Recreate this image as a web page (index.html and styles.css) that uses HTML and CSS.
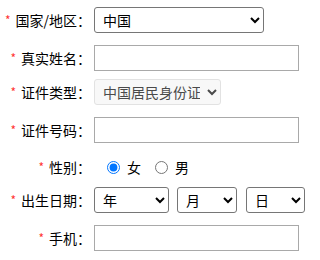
FILE: index.html
```html
<!DOCTYPE html>
<html lang="zh-CN">
<head>
<meta charset="utf-8">
<title>注册</title>
<link rel="stylesheet" href="styles.css">
</head>
<body>
<form class="form">
  <div class="row r1">
    <label class="lbl"><span class="req">*</span>国家/地区：</label>
    <select class="sel sel-country"><option>中国</option></select>
  </div>
  <div class="row r2">
    <label class="lbl"><span class="req">*</span>真实姓名：</label>
    <input class="txt" type="text">
  </div>
  <div class="row r3">
    <label class="lbl"><span class="req">*</span>证件类型：</label>
    <select class="sel sel-id" disabled><option>中国居民身份证</option></select>
  </div>
  <div class="row r4">
    <label class="lbl"><span class="req">*</span>证件号码：</label>
    <input class="txt" type="text">
  </div>
  <div class="row r5">
    <label class="lbl"><span class="req">*</span>性别：</label>
    <div class="radios">
      <label class="opt"><input class="rad" type="radio" name="sex" checked>女</label>
      <label class="opt"><input class="rad" type="radio" name="sex">男</label>
    </div>
  </div>
  <div class="row r6">
    <label class="lbl"><span class="req">*</span>出生日期：</label>
    <select class="sel sel-year"><option>年</option></select>
    <select class="sel sel-month"><option>月</option></select>
    <select class="sel sel-day"><option>日</option></select>
  </div>
  <div class="row r7">
    <label class="lbl"><span class="req">*</span>手机：</label>
    <input class="txt" type="text">
  </div>
</form>
</body>
</html>
```
FILE: styles.css
```css
body {
  margin: 0;
  background: #fff;
  color: #000;
  font-family: "Noto Sans CJK SC", sans-serif;
  font-size: 14px;
}
.form {
  padding-top: 7px;
}
.row {
  display: flex;
  align-items: center;
  height: 26px;
  margin-bottom: 12px;
}
.r2 { margin-bottom: 8px; }
.r4 { margin-bottom: 11px; }
.r5 { margin-bottom: 7px; }
.lbl {
  width: 91px;
  margin-right: 3px;
  text-align: right;
  white-space: nowrap;
  line-height: 26px;
}
.req {
  color: #f33;
  font-size: 12px;
  margin-right: 5px;
  vertical-align: 1px;
}
.sel {
  box-sizing: border-box;
  height: 26px;
  padding: 0 4px;
  border: 1px solid #767676;
  border-radius: 3px;
  background: #fff;
  color: #000;
  font-family: "Noto Sans CJK SC", sans-serif;
  font-size: 14px;
}
.sel:disabled {
  background: #f8f8f8;
  border-color: #e2e2e2;
  color: #4a4a4a;
  opacity: 1;
}
.sel:disabled option {
  color: #4a4a4a;
}
.sel-country { width: 170px; }
.sel-id { width: 127px; }
.sel-year { width: 75px; margin-right: 8px; }
.sel-month { width: 60px; margin-right: 9px; }
.sel-day { width: 59px; }
.txt {
  box-sizing: border-box;
  width: 205px;
  height: 26px;
  margin: 0;
  padding: 0 4px;
  border: 1px solid #a9a9a9;
  border-radius: 0;
  font-family: inherit;
  font-size: 14px;
}
.radios {
  display: flex;
  align-items: center;
  padding-left: 13px;
}
.opt {
  display: flex;
  align-items: center;
  margin-right: 14px;
}
.rad {
  width: 13px;
  height: 13px;
  margin: 0 7px 0 0;
}
```
